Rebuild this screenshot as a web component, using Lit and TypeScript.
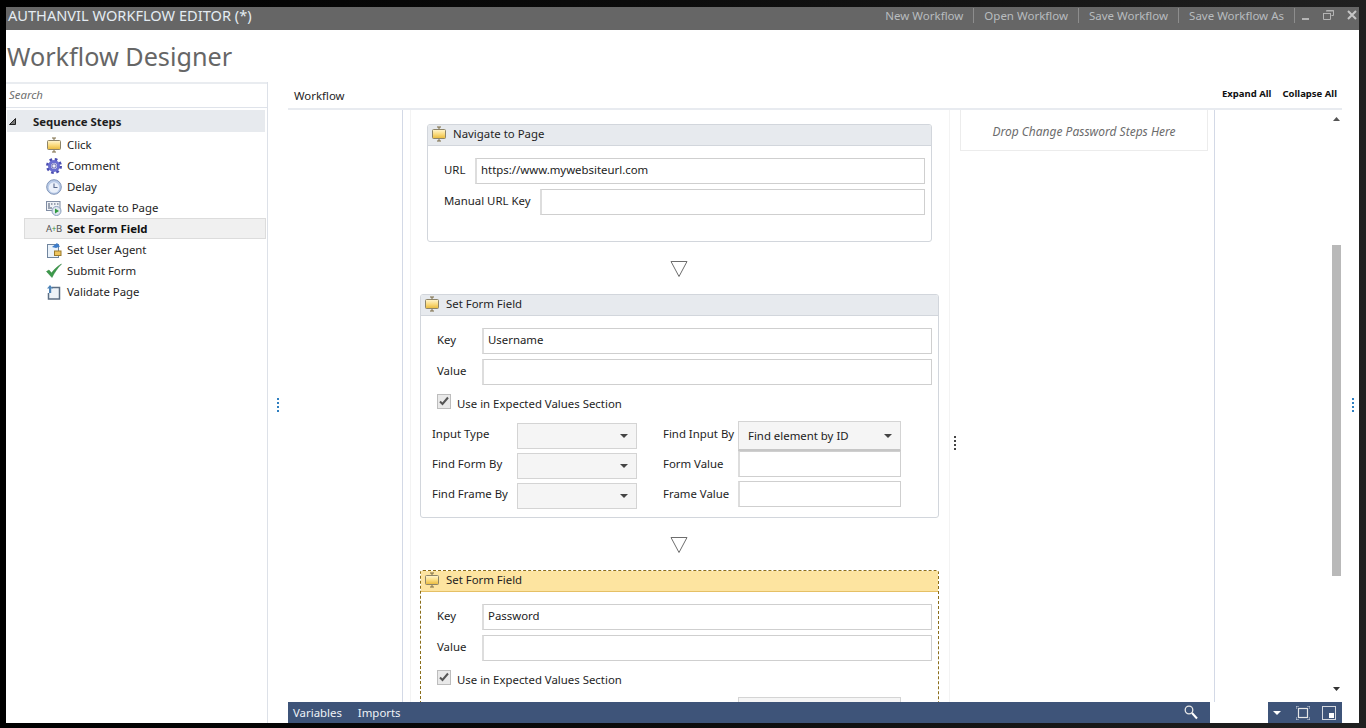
import { LitElement, html, css, svg } from "lit";
import { customElement } from "lit/decorators.js";

const seqIcon = svg`<svg class="ic" width="16" height="16" viewBox="0 0 16 16">
<defs><linearGradient id="g" x1="0" y1="0" x2="0" y2="1"><stop offset="0" stop-color="#fff6d2"/><stop offset=".5" stop-color="#fbdc80"/><stop offset="1" stop-color="#e8b93c"/></linearGradient></defs>
<path d="M6 1h4M8 1v2.500M8 12.500V15M6 15h4" stroke="#7a6a45" stroke-width="1" fill="none"/>
<rect x="1.500" y="3.500" width="13" height="9" rx="1" fill="url(#g)" stroke="#8d8468"/></svg>`;
const gearIcon = svg`<svg class="ic" width="16" height="16" viewBox="0 0 16 16">
<circle cx="8" cy="8" r="6.500" fill="none" stroke="#4a4db0" stroke-width="3" stroke-dasharray="2.550 2.550"/>
<circle cx="8" cy="8" r="4.500" fill="none" stroke="#6a6ed0" stroke-width="3"/>
<circle cx="8" cy="8" r="2.200" fill="#eceefc" stroke="#3d3f96" stroke-width=".8"/></svg>`;
const clockIcon = svg`<svg class="ic" width="16" height="16" viewBox="0 0 16 16">
<circle cx="8" cy="8" r="7.300" fill="#b9cbe8" stroke="#8296b8"/><circle cx="8" cy="8.500" r="5.200" fill="#eaf0fa"/>
<path d="M8 4.500v4h3.500" stroke="#5a6c90" stroke-width="1.100" fill="none"/></svg>`;
const navIcon = svg`<svg class="ic" width="16" height="16" viewBox="0 0 16 16">
<rect x=".5" y="1.500" width="13.500" height="9" fill="#eef1f6" stroke="#7f8ca3"/>
<path d="M2 4h2M5 4h1.500M8 4h1.500M11 4h1.500M2 6h2M2 8h4" stroke="#48566e" stroke-width="1.200"/>
<circle cx="10.500" cy="11" r="4.500" fill="#dfe6f0" stroke="#8ba0bd"/><path d="M9 8.500l4 2.500-4 2.500z" fill="#2f9a3c"/></svg>`;
const agentIcon = svg`<svg class="ic" width="16" height="16" viewBox="0 0 16 16">
<rect x="1.500" y="2.500" width="11" height="13" fill="#eaf2fa" stroke="#70859e"/>
<path d="M6 5l5-4 3 3.500-4 1.500z" fill="#3d7cc9"/><rect x="8.500" y="9" width="6.500" height="4.500" fill="#eec55f" stroke="#9a7a2d"/></svg>`;
const checkIcon = svg`<svg class="ic" width="16" height="16" viewBox="0 0 16 16">
<path d="M0.500 8.500l2.500-1.500 2.500 3C8 6.500 11 3.500 15.500 1 11.500 5 8.500 9.500 6 14.500z" fill="#3c9a4a" stroke="#2b7d38" stroke-width=".5"/></svg>`;
const validateIcon = svg`<svg class="ic" width="16" height="16" viewBox="0 0 16 16">
<path d="M6 3.500h7.500v11.500h-11v-6" fill="#eef3f8" stroke="#5d6f84" stroke-width="1.500"/>
<path d="M4 1l3 3.500H5.200V9H3V4.500H1z" fill="#4d84b8"/></svg>`;
const abIcon = html`<span class="ab">A<i>+</i>B</span>`;

const steps = [
  { name: "Click", icon: seqIcon },
  { name: "Comment", icon: gearIcon },
  { name: "Delay", icon: clockIcon },
  { name: "Navigate to Page", icon: navIcon },
  { name: "Set Form Field", icon: abIcon, selected: true },
  { name: "Set User Agent", icon: agentIcon },
  { name: "Submit Form", icon: checkIcon },
  { name: "Validate Page", icon: validateIcon },
];

const triangle = html`<svg class="tri" width="18" height="18" viewBox="0 0 18 18"><path d="M1 1.500h16L9 16.500z" fill="#fff" stroke="#6d6d6d"/></svg>`;
const dots = (cls: string) => html`<div class="dots ${cls}"><b></b><b></b><b></b><b></b></div>`;
const caret = html`<svg class="caret" width="8" height="4" viewBox="0 0 8 4"><path d="M0 0h8L4 4z" fill="#444"/></svg>`;
const tick = html`<span class="check"><svg width="12" height="12" viewBox="0 0 12 12"><path d="M2 6.500l2.500 2.500L10 2.500" fill="none" stroke="#555" stroke-width="2"/></svg></span>`;

@customElement("app-root")
export class AppRoot extends LitElement {
  static styles = css`
    :host { display: block; width: 1366px; height: 728px; overflow: hidden; font-family: "Noto Sans", "Liberation Sans", sans-serif; font-size: 11.4px; color: #1e1e1e; }
    * { box-sizing: border-box; }
    .desk { width: 1366px; height: 728px; padding: 7px 7px 5px 6px; background: linear-gradient(90deg, #000 0, #0c0c0c 50%, #202020 100%); }
    .win { height: 716px; display: flex; flex-direction: column; background: #fff; }
    .title { height: 23px; flex: none; background: #666; display: flex; align-items: center; padding: 0 0 7px 2px; color: #e4ecf2; font-size: 14.6px; }
    .title .name { flex: 1; }
    .menu { display: flex; align-items: center; color: #b8bcbf; font-size: 11.5px; }
    .menu span { padding: 0 10px; height: 15px; line-height: 15px; border-right: 1px solid #8d8d8d; }
    .ctl { display: flex; align-items: center; width: 64px; height: 16px; }
    .ctl svg { display: block; flex: none; }
    .head { height: 52px; flex: none; font-size: 25.2px; line-height: 52px; color: #666; padding-left: 1px; }
    .main { flex: 1; min-height: 0; display: flex; }

    .left { width: 262px; flex: none; border-right: 1px solid #dde1e8; display: flex; flex-direction: column; }
    .search { height: 26px; flex: none; border-top: 2px solid #e9ecf0; border-bottom: 1px solid #dfe3ea; padding-left: 3px; line-height: 21px; font-style: italic; color: #6f6f6f; }
    .tree { padding: 2px 2px 0 1px; }
    .group { height: 22px; background: #e7eaee; display: flex; align-items: center; font-weight: 700; }
    .group .arr { width: 26px; padding-left: 2px; display: flex; }
    .rows { display: flex; flex-direction: column; margin-top: 2px; padding-left: 17px; }
    .row { height: 21px; display: flex; align-items: center; gap: 5px; padding-left: 21px; border: 1px solid transparent; margin-right: -1px; }
    .row.sel { background: #f0f0f0; border-color: #dcdcdc; font-weight: 700; color: #111; }
    .ic { flex: none; display: block; }
    .ab { width: 16px; flex: none; font-size: 9.500px; color: #555; white-space: nowrap; letter-spacing: -.3px; font-weight: 400; }
    .ab i { font-style: normal; font-size: 8px; color: #3a8f46; }

    .gut { width: 20px; flex: none; display: flex; align-items: center; justify-content: center; }
    .dots { display: flex; flex-direction: column; gap: 2px; width: 2px; flex: none; }
    .dots b { display: block; width: 2px; height: 2px; background: #444; }
    .dots.blue b { background: #2f7fc0; }
    .gut .dots { margin-top: 4px; margin-left: -1px; }

    .designer { width: 1054px; flex: none; display: flex; flex-direction: column; }
    .dh { height: 28px; flex: none; border-bottom: 2px solid #e8ebf0; display: flex; align-items: center; padding: 0 5px 0 6px; }
    .dh .t { flex: 1; padding-top: 1px; }
    .dh .x { font-size: 9.500px; font-weight: 700; color: #111; margin-left: 11px; margin-top: -4px; }
    .canvas { flex: 1; min-height: 0; display: flex; overflow: hidden; }
    .g1 { width: 114px; flex: none; }
    .seq { width: 8px; flex: none; border-left: 1px solid #d3d9e6; }
    .center { width: 540px; flex: none; border-left: 1px solid #f3f3f3; border-right: 1px solid #f3f3f3; padding: 14px 1px 0 0; display: flex; flex-direction: column; align-items: center; }
    .split { width: 10px; flex: none; display: flex; justify-content: center; padding-top: 326px; }
    .drop { width: 248px; flex: none; align-self: flex-start; height: 41px; border: 1px solid #ececec; border-top: 0; text-align: center; line-height: 44px; font-size: 12px; font-style: italic; color: #6c6c6c; }
    .g2 { width: 6px; flex: none; }
    .scrollwrap { flex: 1; border-left: 1px solid #d3d9e6; display: flex; justify-content: flex-end; padding-right: 1px; }
    .sb { width: 9px; display: flex; flex-direction: column; align-items: center; }
    .sb .up { margin-top: 7px; }
    .sb .thumb { width: 9px; height: 331px; background: #b9b9b9; margin-top: 124px; }
    .sb .down { margin-top: 111px; }

    .card { flex: none; border: 1px solid #d2d6dc; border-radius: 3px; background: #fff; }
    .card.nav { width: 505px; height: 118px; }
    .card.form { width: 519px; height: 224px; }
    .card.act { height: 300px; border: 1px dashed #8a6d1a; }
    .ch { height: 21px; background: #e7eaee; border-bottom: 1px solid #d2d6dc; display: flex; align-items: center; gap: 6px; padding: 0 0 3px 3px; border-radius: 2px 2px 0 0; }
    .act .ch { background: #fde4a0; border-bottom-color: #e5c066; border-radius: 0; }
    .tri { display: block; flex: none; margin: 18px 1px 16px 0; }
    .body { padding: 12px 6px 0 16px; }
    .line { display: flex; align-items: center; margin-bottom: 5px; }
    .lab { margin-top: -4px; }
    .input { height: 26px; border: 1px solid #cfcfcf; border-left-width: 2px; border-left-color: #ddd; padding-left: 4px; line-height: 22px; background: #fff; color: #222; }
    .grow { flex: 1; }
    .w31 { width: 450px; }
    .w65 { width: 385px; }
    .kv { width: 45px; flex: none; }
    .nl { width: 31px; flex: none; }
    .ml { width: 96px; flex: none; }
    .cb { display: flex; align-items: center; gap: 6px; margin: 8px 0 12px; height: 16px; }
    .cb span:last-child { margin-top: 4px; }
    .check { width: 14px; height: 15px; background: #e9e9e9; border: 1px solid #bdbdbd; display: flex; align-items: center; justify-content: center; }
    .grid { display: grid; grid-template-columns: 85px 120px 26px 75px 163px; grid-auto-rows: 30px; margin-left: -5px; align-items: center; }
    .grid .lab { margin: -3px 0 3px; }
    .sel2 { height: 26px; width: 120px; background: #f5f5f5; border: 1px solid #d4d4d4; display: flex; align-items: center; justify-content: flex-end; padding-right: 8px; }
    .sel3 { height: 30px; width: 163px; background: #f5f5f5; border: 1px solid #d4d4d4; border-bottom: 2px solid #c6c6c6; display: flex; align-items: center; justify-content: space-between; padding: 0 8px 0 9px; color: #222; }
    .small { width: 163px; padding-left: 0; align-self: start; }
    .caret { display: block; }
    .span-to-last { grid-column: 5; }

    .rstrip { flex: 1; display: flex; align-items: center; justify-content: center; }
    .rstrip .dots { margin-top: 4px; margin-left: 4px; }
    .status { height: 21px; flex: none; background: #3e5479; color: #eef2f7; display: flex; align-items: center; padding-left: 5px; }
    .status span { margin-right: 16px; }
    .status .sp { flex: 1; }
    .status svg { display: block; flex: none; }
    .zoom { width: 58px; height: 21px; background: #fff; margin: 0 5px 0 12px; flex: none; }
  `;

  private key(k: string, v: string) {
    return html`<div class="line"><div class="kv lab">${k}</div><div class="input grow">${v}</div></div>`;
  }

  private form(cls: string, k: string, full: boolean) {
    return html`<div class="card form ${cls}">
      <div class="ch">${seqIcon}<span>Set Form Field</span></div>
      <div class="body">
        ${this.key("Key", k)}
        ${this.key("Value", "")}
        <div class="cb">${tick}<span>Use in Expected Values Section</span></div>
        ${full ? html`<div class="grid">
          <div class="lab">Input Type</div><div class="sel2">${caret}</div><div></div><div class="lab">Find Input By</div><div class="sel3"><span>Find element by ID</span>${caret}</div>
          <div class="lab">Find Form By</div><div class="sel2">${caret}</div><div></div><div class="lab">Form Value</div><div class="input small"></div>
          <div class="lab">Find Frame By</div><div class="sel2">${caret}</div><div></div><div class="lab">Frame Value</div><div class="input small"></div>
        </div>` : html`<div class="grid"><div class="sel3 span-to-last"></div></div>`}
      </div>
    </div>`;
  }

  render() {
    return html`<div class="desk"><div class="win">
      <div class="title">
        <div class="name">AUTHANVIL WORKFLOW EDITOR (*)</div>
        <div class="menu"><span>New Workflow</span><span>Open Workflow</span><span>Save Workflow</span><span>Save Workflow As</span></div>
        <div class="ctl">
          <svg style="margin-left:7px" width="8" height="10" viewBox="0 0 8 10"><rect y="8" width="7" height="2" fill="#b4b4b4"/></svg>
          <svg style="margin-left:13px" width="11" height="10" viewBox="0 0 11 10"><path d="M3.500.5h7v5h-2M.5 3.500h7v6h-7z" fill="none" stroke="#b4b4b4"/><path d="M3 1h8M0 3.500h8" stroke="#b4b4b4"/></svg>
          <svg style="margin-left:13px" width="10" height="10" viewBox="0 0 10 10"><path d="M1 1l8 8M9 1l-8 8" stroke="#c6c6c6" stroke-width="2"/></svg>
        </div>
      </div>
      <div class="head">Workflow Designer</div>
      <div class="main">
        <div class="left">
          <div class="search">Search</div>
          <div class="tree">
            <div class="group"><span class="arr"><svg width="7" height="7" viewBox="0 0 7 7"><path d="M6.500.5v6H.5z" fill="#777" stroke="#222"/></svg></span>Sequence Steps</div>
            <div class="rows">
              ${steps.map(s => html`<div class="row ${s.selected ? "sel" : ""}">${s.icon}<span>${s.name}</span></div>`)}
            </div>
          </div>
        </div>
        <div class="gut">${dots("blue")}</div>
        <div class="designer">
          <div class="dh"><div class="t">Workflow</div><div class="x">Expand All</div><div class="x">Collapse All</div></div>
          <div class="canvas">
            <div class="g1"></div>
            <div class="seq"></div>
            <div class="center">
              <div class="card nav">
                <div class="ch">${seqIcon}<span>Navigate to Page</span></div>
                <div class="body">
                  <div class="line"><div class="nl lab">URL</div><div class="input w31">https://www.mywebsiteurl.com</div></div>
                  <div class="line"><div class="ml lab">Manual URL Key</div><div class="input w65"></div></div>
                </div>
              </div>
              ${triangle}
              ${this.form("", "Username", true)}
              ${triangle}
              ${this.form("act", "Password", false)}
            </div>
            <div class="split">${dots("")}</div>
            <div class="drop">Drop Change Password Steps Here</div>
            <div class="g2"></div>
            <div class="scrollwrap"><div class="sb">
              <svg class="up" width="7" height="4" viewBox="0 0 7 4"><path d="M0 4h7L3.500 0z" fill="#555"/></svg>
              <div class="thumb"></div>
              <svg class="down" width="7" height="4" viewBox="0 0 7 4"><path d="M0 0h7L3.500 4z" fill="#333"/></svg>
            </div></div>
          </div>
          <div class="status">
            <span>Variables</span><span>Imports</span>
            <div class="sp"></div>
            <svg width="14" height="15" viewBox="0 0 14 15"><circle cx="5" cy="5" r="3.800" fill="none" stroke="#e8e8e8" stroke-width="1.300"/><path d="M8 8l5 5.500" stroke="#fff" stroke-width="2"/></svg>
            <div class="zoom"></div>
            <svg width="8" height="4" viewBox="0 0 8 4"><path d="M0 0h8L4 4z" fill="#fff"/></svg>
            <svg style="margin-left:15px" width="14" height="14" viewBox="0 0 14 14"><rect x="2.500" y="2.500" width="9" height="9" fill="none" stroke="#e6e6e6" stroke-width="1.200"/><path d="M0 3V0h3M11 0h3v3M14 11v3h-3M3 14H0v-3" fill="none" stroke="#cfd6e2"/></svg>
            <svg style="margin-left:12px;margin-right:6px" width="14" height="14" viewBox="0 0 14 14"><rect x=".5" y=".5" width="13" height="13" fill="#3e5479" stroke="#d5d9e0"/><rect x="7" y="7" width="5" height="5" fill="#fff"/></svg>
          </div>
        </div>
        <div class="rstrip">${dots("blue")}</div>
      </div>
    </div></div>`;
  }
}
